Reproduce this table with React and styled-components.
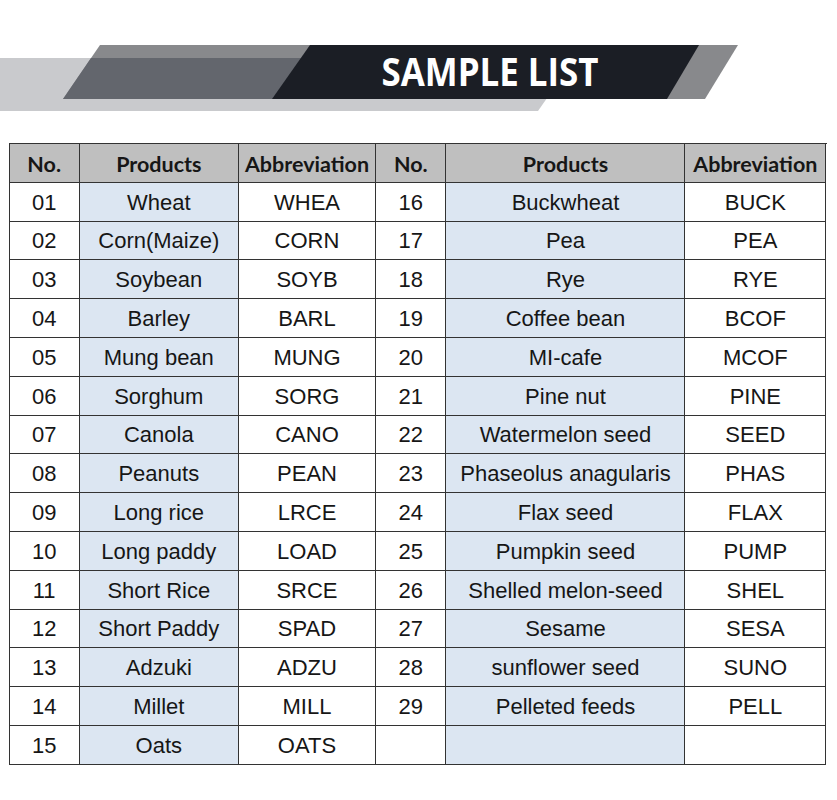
import React from 'react';
import styled, { createGlobalStyle } from 'styled-components';

const GlobalStyle = createGlobalStyle`
  html, body {
    margin: 0;
    padding: 0;
    background: #ffffff;
  }
  * {
    box-sizing: border-box;
  }
`;

const colors = {
  line: '#333333',
  head: '#bfbfbf',
  blue: '#dce6f2',
  text: '#161616',
};

const Page = styled.div`
  width: 837px;
  height: 800px;
  background: #ffffff;
  font-family: 'Liberation Sans', Arial, sans-serif;
  color: ${colors.text};
`;

const Banner = styled.svg`
  display: block;
  width: 837px;
  height: 143px;
`;

const Title = styled.text`
  font-family: 'Open Sans', 'DejaVu Sans', sans-serif;
  font-weight: 700;
  font-size: 39px;
  fill: #ffffff;
`;

const Sheet = styled.div`
  margin-left: 8.5px;
  width: 818.2px;
  display: grid;
  grid-template-columns: 70.3px 159px 137.4px 70.3px 239px 140.7px;
  grid-auto-rows: 38.8px;
  border-top: 1.5px solid ${colors.line};
  border-left: 1.5px solid ${colors.line};
`;

const Cell = styled.div`
  display: flex;
  align-items: center;
  justify-content: center;
  border-right: 1.5px solid ${colors.line};
  border-bottom: 1.5px solid ${colors.line};
  background: ${props =>
    props.$head ? colors.head : props.$blue ? colors.blue : '#ffffff'};
  font-family: ${props =>
    props.$head ? "Lato, 'Liberation Sans', sans-serif" : "'Liberation Sans', Arial, sans-serif"};
  font-weight: ${props => (props.$head ? 700 : 400)};
  font-size: ${props => (props.$head ? '21.5px' : '22px')};
  white-space: nowrap;
  padding-top: 2px;
`;

const left = [
  ['01', 'Wheat', 'WHEA'],
  ['02', 'Corn(Maize)', 'CORN'],
  ['03', 'Soybean', 'SOYB'],
  ['04', 'Barley', 'BARL'],
  ['05', 'Mung bean', 'MUNG'],
  ['06', 'Sorghum', 'SORG'],
  ['07', 'Canola', 'CANO'],
  ['08', 'Peanuts', 'PEAN'],
  ['09', 'Long rice', 'LRCE'],
  ['10', 'Long paddy', 'LOAD'],
  ['11', 'Short Rice', 'SRCE'],
  ['12', 'Short Paddy', 'SPAD'],
  ['13', 'Adzuki', 'ADZU'],
  ['14', 'Millet', 'MILL'],
  ['15', 'Oats', 'OATS'],
];

const right = [
  ['16', 'Buckwheat', 'BUCK'],
  ['17', 'Pea', 'PEA'],
  ['18', 'Rye', 'RYE'],
  ['19', 'Coffee bean', 'BCOF'],
  ['20', 'MI-cafe', 'MCOF'],
  ['21', 'Pine nut', 'PINE'],
  ['22', 'Watermelon seed', 'SEED'],
  ['23', 'Phaseolus anagularis', 'PHAS'],
  ['24', 'Flax seed', 'FLAX'],
  ['25', 'Pumpkin seed', 'PUMP'],
  ['26', 'Shelled melon-seed', 'SHEL'],
  ['27', 'Sesame', 'SESA'],
  ['28', 'sunflower seed', 'SUNO'],
  ['29', 'Pelleted feeds', 'PELL'],
  ['', '', ''],
];

const headers = ['No.', 'Products', 'Abbreviation'];

const SampleBanner = () => (
  <Banner viewBox="0 0 837 143">
    <polygon points="0,58 575,58 538,111 0,111" fill="#c9cacd" />
    <polygon points="100,45 738,45 705,99 63,99" fill="#88898c" />
    <polygon points="91,58 600,58 600,99 63,99" fill="#63666d" />
    <polygon points="310,45 699,45 667,99 272,99" fill="#1b1e25" />
    <Title
      x="490"
      y="86"
      textAnchor="middle"
      textLength="217"
      lengthAdjust="spacingAndGlyphs"
    >
      SAMPLE LIST
    </Title>
  </Banner>
);

const App = () => {
  return (
    <Page>
      <GlobalStyle />
      <SampleBanner />
      <Sheet>
        {[...headers, ...headers].map((h, i) => (
          <Cell key={'h' + i} $head>
            {h}
          </Cell>
        ))}
        {left.map((row, i) =>
          [...row, ...right[i]].map((v, j) => (
            <Cell key={i + '-' + j} $blue={j % 3 === 1}>
              {v}
            </Cell>
          ))
        )}
      </Sheet>
    </Page>
  );
};

export default App;
